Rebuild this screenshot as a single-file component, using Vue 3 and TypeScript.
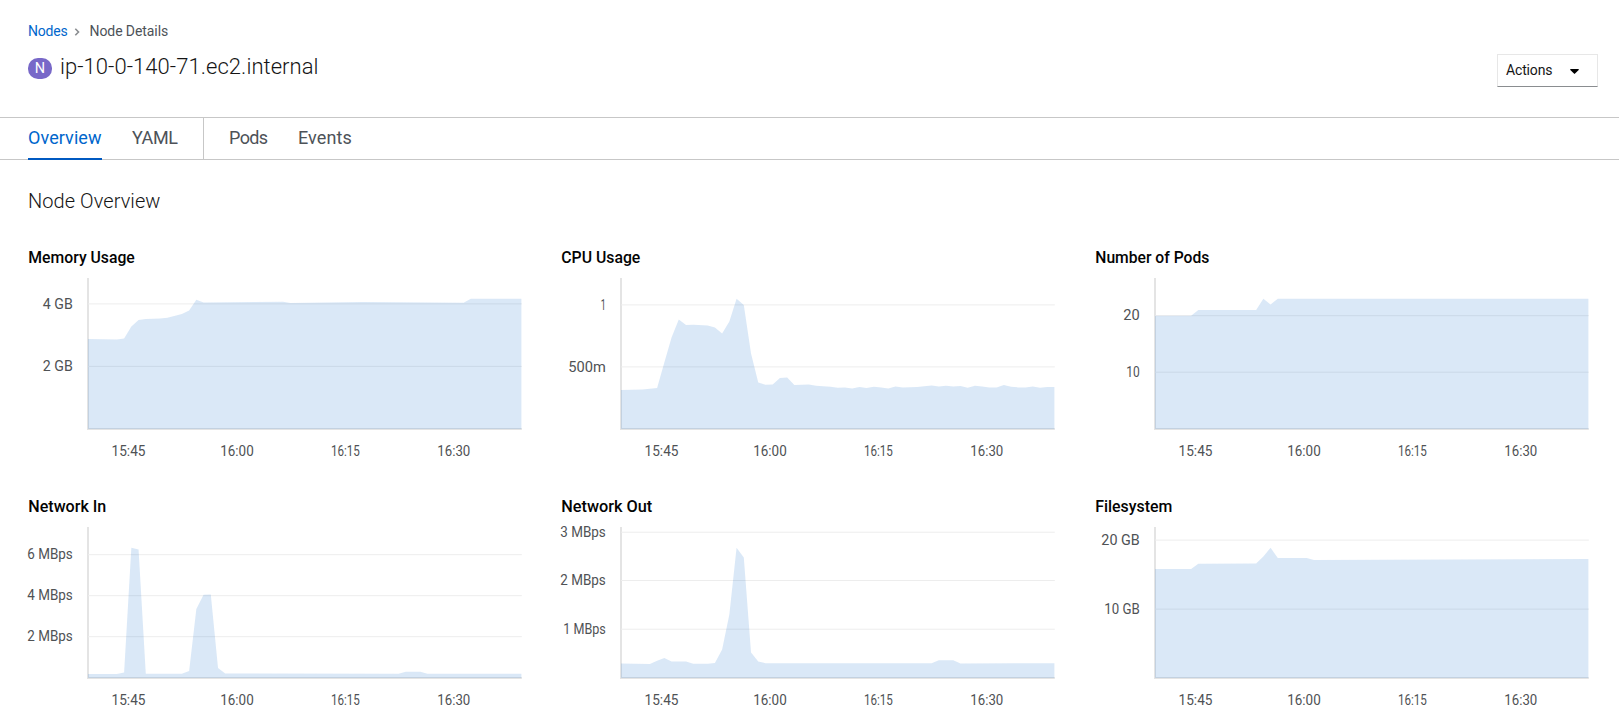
<script setup lang="ts">
interface Tick { label: string; y: number; w: number }
interface Chart { title: string; tw: number; ticks: Tick[]; points: [number, number][] }

const step = 433.4 / 60
const base = 150.6
const times = [
  { label: '15:45', x: 40.5, w: 34 },
  { label: '16:00', x: 149, w: 33.5 },
  { label: '16:15', x: 257.4, w: 29 },
  { label: '16:30', x: 365.8, w: 33 },
]

/* Each point is [minutes from the left edge, distance from the top of the plot]. */
const charts: Chart[] = [
  {
    title: 'Memory Usage', tw: 106.5,
    ticks: [{ label: '4 GB', y: 25.5, w: 30 }, { label: '2 GB', y: 88, w: 30 }],
    points: [[0, 60.6], [4, 61.2], [5, 60.2], [6, 48], [7, 41.6], [8, 40.5], [10, 40], [11, 39.4], [13, 35.5], [14, 32], [15, 21.4], [16, 24], [27, 23.4], [28, 24.6], [38, 23.5], [52, 24.4], [53, 20.4], [60, 20.4]],
  },
  {
    title: 'CPU Usage', tw: 79,
    ticks: [{ label: '1', y: 26.5, w: 5 }, { label: '500m', y: 88.5, w: 37.5 }],
    points: [[0, 111.5], [3, 111], [5, 109.5], [6, 84], [7, 59], [8, 41], [9, 46.6], [10, 46.4], [12, 47], [13, 49], [14, 55], [15, 43], [16, 20.3], [17, 26.5], [18, 75], [19, 104], [20, 106.4], [21, 106], [22, 99.7], [23, 99], [24, 106.7], [26, 106], [27, 107.4], [29, 108.4], [30, 109.3], [31, 109], [32, 110], [33, 108.6], [34, 109.5], [35, 108.3], [36, 109], [37, 110], [38, 108], [39, 109], [41, 108.6], [43, 107], [44, 108], [45, 107.3], [46, 108], [47, 107.5], [48, 109.3], [49, 107.3], [50, 108], [51, 109], [52, 109], [53, 106.7], [54, 108.3], [55, 109], [56, 109], [57, 108], [58, 109.3], [59, 108.6], [60, 108.6]],
  },
  {
    title: 'Number of Pods', tw: 114,
    ticks: [{ label: '20', y: 37.3, w: 16.5 }, { label: '10', y: 93.8, w: 13.5 }],
    points: [[0, 37.3], [5, 37.3], [6, 31.7], [14, 31.7], [15, 20.3], [16, 26], [17, 20.3], [60, 20.3]],
  },
  {
    title: 'Network In', tw: 78,
    ticks: [{ label: '6 MBps', y: 27.3, w: 45.5 }, { label: '4 MBps', y: 68.3, w: 45.5 }, { label: '2 MBps', y: 109.3, w: 45.5 }],
    points: [[0, 146.6], [4, 146.6], [5, 145], [6, 20.3], [7, 22], [8, 146.4], [13, 146.4], [14, 143.5], [15, 81.5], [16, 67.3], [17, 67], [18, 140.5], [19, 146], [43, 146.4], [44, 144.3], [46, 144.3], [47, 146.4], [60, 146.4]],
  },
  {
    title: 'Network Out', tw: 91,
    ticks: [{ label: '3 MBps', y: 4.8, w: 45.5 }, { label: '2 MBps', y: 53.1, w: 45.5 }, { label: '1 MBps', y: 101.8, w: 42.5 }],
    points: [[0, 136.2], [4, 136.6], [5, 133.4], [6, 130.7], [7, 134], [9, 134], [10, 136.4], [12, 136.4], [13, 135.5], [14, 122], [15, 87], [16, 20.4], [17, 30], [18, 125], [19, 134], [20, 135.8], [43, 135.8], [44, 132.8], [46, 132.8], [47, 136], [60, 135.8]],
  },
  {
    title: 'Filesystem', tw: 77,
    ticks: [{ label: '20 GB', y: 12.7, w: 38.5 }, { label: '10 GB', y: 81.7, w: 35.5 }],
    points: [[0, 41.6], [5, 41.6], [6, 36.3], [14, 36], [15, 29], [16, 20.3], [17, 30.7], [21, 30.7], [22, 32.5], [60, 31.5]],
  },
]

function area(points: [number, number][]): string {
  const line = points.map(([i, y]) => `${(i * step).toFixed(2)},${y}`).join(' ')
  return `0,${base} ${line} ${60 * step},${base}`
}
</script>

<template>
  <div class="page">
    <header class="heading">
      <div>
        <nav class="crumbs">
          <a class="link">Nodes</a>
          <svg class="chevron" viewBox="0 0 6 8"><path d="M1.3 .8 4.5 4 1.3 7.2" /></svg>
          <span class="current">Node Details</span>
        </nav>
        <h1 class="title"><span class="badge">N</span><span class="name">ip-10-0-140-71.ec2.internal</span></h1>
      </div>
      <button class="actions"><span>Actions</span><svg viewBox="0 0 9 5"><path d="M.3 0H8.7V.9L4.5 5 .3.9Z" /></svg></button>
    </header>
    <ul class="tabs">
      <li class="tab active overview">Overview</li>
      <li class="tab yaml">YAML</li>
      <li class="divider"></li>
      <li class="tab pods">Pods</li>
      <li class="tab events">Events</li>
    </ul>
    <main class="content">
      <h2 class="section">Node Overview</h2>
      <div class="grid">
        <section v-for="c in charts" :key="c.title" class="card">
          <svg class="chart" width="505" height="249" viewBox="0 0 505 249">
            <text class="chart-title" x=".3" y="20" :textLength="c.tw" lengthAdjust="spacingAndGlyphs">{{ c.title }}</text>
            <g transform="translate(60 36)">
              <path class="axis" d="M0 -1V150H433.8" />
              <g transform="translate(0 -.6)">
                <line v-for="t in c.ticks" :key="t.label" class="gridline" x1="0" x2="433.8" :y1="t.y" :y2="t.y" />
                <polygon class="area" :points="area(c.points)" />
                <text v-for="t in c.ticks" :key="t.label" class="label" :x="-15.2 - t.w" :y="t.y + 4.8" :textLength="t.w" lengthAdjust="spacingAndGlyphs">{{ t.label }}</text>
              </g>
              <text v-for="t in times" :key="t.label" class="label" :x="t.x - t.w / 2" y="176.8" :textLength="t.w" lengthAdjust="spacingAndGlyphs">{{ t.label }}</text>
            </g>
          </svg>
        </section>
      </div>
    </main>
  </div>
</template>

<style>
body { margin: 0; background: #fff; }
</style>

<style scoped>
.page { box-sizing: border-box; width: 1619px; height: 723px; overflow: hidden; font-family: Roboto, "Open Sans", sans-serif; color: #151515; background: #fff; }
.heading { display: flex; justify-content: space-between; height: 117px; padding: 0 21px 0 28px; }
.crumbs { display: flex; align-items: center; height: 20px; margin-top: 21px; font-size: 14px; }
.link { width: 39px; color: #06c; letter-spacing: -.2px; }
.chevron { width: 6px; height: 8px; margin: 1px 9px 0 7px; fill: none; stroke: #8a8d90; stroke-width: 1.6; }
.current { margin-left: .5px; color: #4d5258; letter-spacing: -.08px; }
.title { display: flex; align-items: center; margin: 12px 0 0; height: 28px; font-size: 22px; font-weight: 300; }
.badge { width: 24px; height: 21px; margin: 3px 8px 0 0; border-radius: 10px; background: #7868c8; color: #fff; font-size: 14.5px; font-weight: 400; line-height: 22px; text-align: center; }
.name { margin-top: -2px; letter-spacing: .05px; white-space: nowrap; }
.actions { box-sizing: border-box; display: flex; align-items: center; width: 101px; height: 33px; margin-top: 54px; padding: 0 18px 1px 8px; justify-content: space-between; border: 1px solid #e7e7e7; border-bottom-color: #8a8d90; background: #fff; color: #151515; font: 14px Roboto, sans-serif; letter-spacing: -.15px; }
.actions svg { width: 9px; height: 5px; margin-top: 3px; }
.tabs { box-sizing: border-box; display: flex; height: 43px; margin: 0; padding: 0 28px; list-style: none; border-top: 1px solid #c7c7c7; border-bottom: 1px solid #c7c7c7; }
.tab { box-sizing: border-box; height: 42px; font-size: 18px; line-height: 40px; color: #4d5258; white-space: nowrap; }
.active { color: #06c; border-bottom: 2px solid #0059c1; }
.overview { width: 74px; margin-right: 30px; letter-spacing: .08px; }
.yaml { width: 46px; letter-spacing: -.4px; }
.divider { width: 1px; height: 41px; margin: 0 25px; background: #c7c7c7; }
.pods { width: 39px; margin-right: 30px; letter-spacing: -.6px; }
.events { letter-spacing: .1px; }
.content { padding: 0 28px; }
.section { height: 28px; margin: 27px 0 0; font-size: 20px; font-weight: 300; line-height: 28px; letter-spacing: .07px; }
.grid { display: grid; grid-template-columns: repeat(3, 505px); gap: 0 28.3px; margin-top: 28px; }
.card { height: 249px; }
.chart { display: block; overflow: visible; }
.chart-title { font-size: 16px; font-weight: 500; fill: #030303; }
.axis { fill: none; stroke: #e4e4e4; stroke-width: 2; }
.gridline { stroke: #ededed; stroke-width: 1; }
.area { fill: #0862c8; fill-opacity: .15; }
.label { font-size: 14px; fill: #4f5255; }
</style>
